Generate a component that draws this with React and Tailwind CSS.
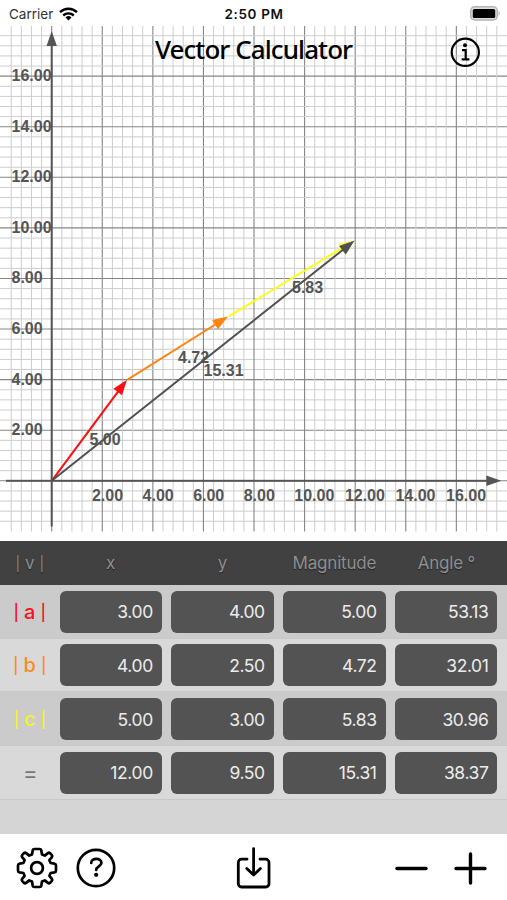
import React from "react";

const ORIGIN_X = 51.7;
const ORIGIN_Y = 480.3;
const UNIT = 25.29;
const STEP = 10.116;
// the svg starts below the status bar
const TOP = 25.5;

const px = (x) => ORIGIN_X + x * UNIT;
const py = (y) => ORIGIN_Y - y * UNIT;

const ticks = [2, 4, 6, 8, 10, 12, 14, 16];
const gridLines = Array.from({ length: 49 }, (_, i) => i - 4);

const vectors = [
  { from: [0, 0], to: [3, 4], color: "#fb0d10" },
  { from: [3, 4], to: [7, 6.5], color: "#ff8412" },
  { from: [7, 6.5], to: [12, 9.5], color: "#fdfd16" },
  { from: [0, 0], to: [12, 9.5], color: "#505050" },
];

const labels = [
  { x: 89.5, y: 444.9, text: "5.00" },
  { x: 178, y: 362.7, text: "4.72" },
  { x: 203.5, y: 375.2, text: "15.31" },
  { x: 292, y: 292.9, text: "5.83" },
];

const headers = ["x", "y", "Magnitude", "Angle °"];

const rows = [
  { name: "a", color: "text-[#f5121b]", bg: "bg-[#cbcbcb]", values: ["3.00", "4.00", "5.00", "53.13"] },
  { name: "b", color: "text-[#fb8c1e]", bg: "bg-[#d9d9d9]", values: ["4.00", "2.50", "4.72", "32.01"] },
  { name: "c", color: "text-[#f7f320]", bg: "bg-[#cbcbcb]", values: ["5.00", "3.00", "5.83", "30.96"] },
  { name: "=", color: "text-[#777777]", bg: "bg-[#d9d9d9]", values: ["12.00", "9.50", "15.31", "38.37"] },
];

const Arrow = ({ from, to, color }) => {
  const x1 = px(from[0]);
  const y1 = py(from[1]);
  const x2 = px(to[0]) - 0.6;
  const y2 = py(to[1]);
  const angle = (Math.atan2(y2 - y1, x2 - x1) * 180) / Math.PI;
  const length = Math.hypot(x2 - x1, y2 - y1);

  return (
    <g transform={`translate(${x1} ${y1}) rotate(${angle})`} fill={color}>
      <rect x="0" y="-1" width={length - 10} height="2" />
      <path d={`M${length} 0 l-15.5 -5.4 v10.8 z`} />
    </g>
  );
};

const Chart = () => (
  <svg
    width="507"
    height="506"
    viewBox={`0 ${TOP} 507 506`}
    className="block"
    fontFamily="'Liberation Sans', sans-serif"
    fontWeight="bold"
    fontSize="16"
  >
    {gridLines.map((i) => {
      const major = i % 5 === 0;
      const stroke = major ? "#858585" : "#cdcdcd";
      const width = major ? 1.1 : 1;
      const x = ORIGIN_X + i * STEP;
      const y = ORIGIN_Y - i * STEP;
      return (
        <g key={i} stroke={stroke} strokeWidth={width}>
          <line x1={x} x2={x} y1={TOP} y2="531" />
          <line x1="0" x2="507" y1={y} y2={y} />
        </g>
      );
    })}
    <g fill="#555555" stroke="none">
      <rect x="50.7" y="40" width="2" height="486" />
      <path d="M51.7 30.5 l-5.2 15 h10.4 z" />
      <rect x="6" y="479.3" width="484" height="2" />
      <path d="M501.3 480.3 l-15 -5.2 v10.4 z" />
      {ticks.map((t) => (
        <g key={t}>
          <text x={px(t) - 10.3} y="500.5">{t.toFixed(2)}</text>
          <text x="11.5" y={py(t) + 4.9}>{t.toFixed(2)}</text>
        </g>
      ))}
      {labels.map((l) => (
        <text key={l.text} x={l.x} y={l.y}>{l.text}</text>
      ))}
    </g>
    {vectors.map((v, i) => (
      <Arrow key={i} {...v} />
    ))}
  </svg>
);

const StatusBar = () => (
  <div className="grid h-[25.5px] grid-cols-3 items-center pl-[9px] pr-[6px] pt-[2px] text-[13.5px] text-[#333]">
    <div className="flex items-center gap-[6px]">
      <span>Carrier</span>
      <svg width="19" height="14" viewBox="0 0 19 14" fill="none" stroke="#000" strokeWidth="2.4">
        <path d="M1 5.2 C5.8 0.6 13.2 0.6 18 5.2" />
        <path d="M4.2 8.5 C7.2 5.7 11.8 5.7 14.8 8.5" />
        <path d="M9.5 13.6 l-3 -3.1 a4.4 4.4 0 0 1 6 0 z" fill="#000" stroke="none" />
      </svg>
    </div>
    <div className="whitespace-nowrap pr-[2px] text-center font-semibold tracking-[0.65px] text-[#111]">2:50 PM</div>
    <div className="flex justify-end">
      <svg width="31" height="15" viewBox="0 0 31 15">
        <rect x="0.7" y="0.8" width="26.6" height="13.2" rx="4" fill="#ddd" stroke="#b5b5b5" strokeWidth="1.5" />
        <rect x="2.8" y="2.9" width="22.4" height="9" rx="1.5" fill="#000" />
        <path d="M28.6 5 q2.6 2.4 0 4.8 z" fill="#b5b5b5" />
      </svg>
    </div>
  </div>
);

const Toolbar = () => (
  <div className="flex h-[66px] items-center bg-white pl-[16px] pr-[20px] pt-[2px]">
    <svg width="42" height="42" viewBox="-21 -21 42 42" fill="none" stroke="#000" strokeWidth="2.7" strokeLinejoin="round">
      <path d="M-2.6 -19 H2.6 Q4 -19 4.3 -17.6 L5 -13.6 L7.8 -12.4 L10.9 -14.9 Q12 -15.8 13.1 -14.7 L14.7 -13.1 Q15.8 -12 14.9 -10.9 L12.4 -7.8 L13.6 -5 L17.6 -4.3 Q19 -4 19 -2.6 V2.6 Q19 4 17.6 4.3 L13.6 5 L12.4 7.8 L14.9 10.9 Q15.8 12 14.7 13.1 L13.1 14.7 Q12 15.8 10.9 14.9 L7.8 12.4 L5 13.6 L4.3 17.6 Q4 19 2.6 19 H-2.6 Q-4 19 -4.3 17.6 L-5 13.6 L-7.8 12.4 L-10.9 14.9 Q-12 15.8 -13.1 14.7 L-14.7 13.1 Q-15.8 12 -14.9 10.9 L-12.4 7.8 L-13.6 5 L-17.6 4.3 Q-19 4 -19 2.6 V-2.6 Q-19 -4 -17.6 -4.3 L-13.6 -5 L-12.4 -7.8 L-14.9 -10.9 Q-15.8 -12 -14.7 -13.1 L-13.1 -14.7 Q-12 -15.8 -10.9 -14.9 L-7.8 -12.4 L-5 -13.6 L-4.3 -17.6 Q-4 -19 -2.6 -19 Z" />
      <circle r="5.9" />
    </svg>
    <svg className="ml-[18px]" width="40" height="40" viewBox="0 0 40 40" fill="none" stroke="#000" strokeWidth="2.7" strokeLinecap="round">
      <circle cx="20" cy="20" r="18.2" />
      <path d="M15.2 15 C15.4 9.6 25.4 9.6 25.4 15 C25.4 18.4 20.2 18.4 20.2 22" />
      <circle cx="20.2" cy="26.8" r="2.1" fill="#000" stroke="none" />
    </svg>
    <svg className="ml-[118px]" width="40" height="44" viewBox="0 0 40 44" fill="none" stroke="#000" strokeWidth="2.8" strokeLinecap="round" strokeLinejoin="round">
      <path d="M13 13.2 H7.5 A3.2 3.2 0 0 0 4.3 16.4 V37.8 A3.2 3.2 0 0 0 7.5 41 H31.8 A3.2 3.2 0 0 0 35 37.8 V16.4 A3.2 3.2 0 0 0 31.8 13.2 H26" />
      <path d="M19.6 2.6 V29 M12.8 22.4 L19.6 29 L26.4 22.4" />
    </svg>
    <div className="ml-auto flex gap-[26px]">
      <svg width="33" height="33" viewBox="0 0 33 33" stroke="#000" strokeWidth="3.4" strokeLinecap="round">
        <path d="M2 16.5 H31" />
      </svg>
      <svg width="33" height="33" viewBox="0 0 33 33" stroke="#000" strokeWidth="3.4" strokeLinecap="round">
        <path d="M2 16.5 H31 M16.5 2 V31" />
      </svg>
    </div>
  </div>
);

const App = () => {
  return (
    <div className="flex h-[900px] w-[507px] flex-col overflow-hidden bg-white font-['Inter',sans-serif]">
      <StatusBar />
      <div className="relative h-[515.5px]">
        <Chart />
        <h1 className="absolute left-[155px] top-[5px] whitespace-nowrap font-['Noto_Sans',sans-serif] text-[26px] font-medium leading-[36px] tracking-[-0.93px] text-black">
          Vector Calculator
        </h1>
        <svg className="absolute left-[450px] top-[11.5px]" width="31" height="31" viewBox="0 0 31 31" fill="none" stroke="#000" strokeWidth="2.2">
          <circle cx="15.3" cy="15.3" r="13.6" />
          <circle cx="15" cy="8.3" r="2" fill="#000" stroke="none" />
          <path d="M12 13.2 H15.7 V22.2 M11.6 22.3 H19.4" />
        </svg>
      </div>
      <div className="flex h-[293px] flex-col bg-[#d5d5d5]">
        <div className="flex h-[43.8px] items-center bg-[#414141] pt-[2px] text-[17px] tracking-[-0.2px] text-[#8f8f8f] [text-shadow:0_1px_1px_#222]">
          <div className="flex w-[59.5px] items-center justify-center gap-[5px]">
            <span className="text-[14px]">|</span>
            <span>v</span>
            <span className="text-[14px]">|</span>
          </div>
          <div className="flex gap-[9.6px]">
            {headers.map((header) => (
              <span key={header} className="w-[102.3px] text-center">
                {header}
              </span>
            ))}
          </div>
        </div>
        {rows.map((row) => (
          <div
            key={row.name}
            className={`flex h-[53.8px] items-center border-b border-[#c9c9c9] pt-[1px] ${row.bg}`}
          >
            {row.name === "=" ? (
              <div className={`w-[59.5px] pl-[1px] text-center text-[22px] ${row.color}`}>=</div>
            ) : (
              <div className={`flex w-[59.5px] items-center justify-center gap-[5px] text-[20px] font-medium ${row.color}`}>
                <span className="text-[16px]">|</span>
                <span>{row.name}</span>
                <span className="text-[16px]">|</span>
              </div>
            )}
            <div className="flex gap-[9.6px]">
              {row.values.map((value, i) => (
                <div
                  key={i}
                  className="flex h-[42px] w-[102.3px] items-center justify-end rounded-[6px] bg-[#535353] pr-[9px] pt-[1px] text-[17.5px] tracking-[-0.4px] text-[#ececec]"
                >
                  {value}
                </div>
              ))}
            </div>
          </div>
        ))}
      </div>
      <Toolbar />
    </div>
  );
};

export default App;
